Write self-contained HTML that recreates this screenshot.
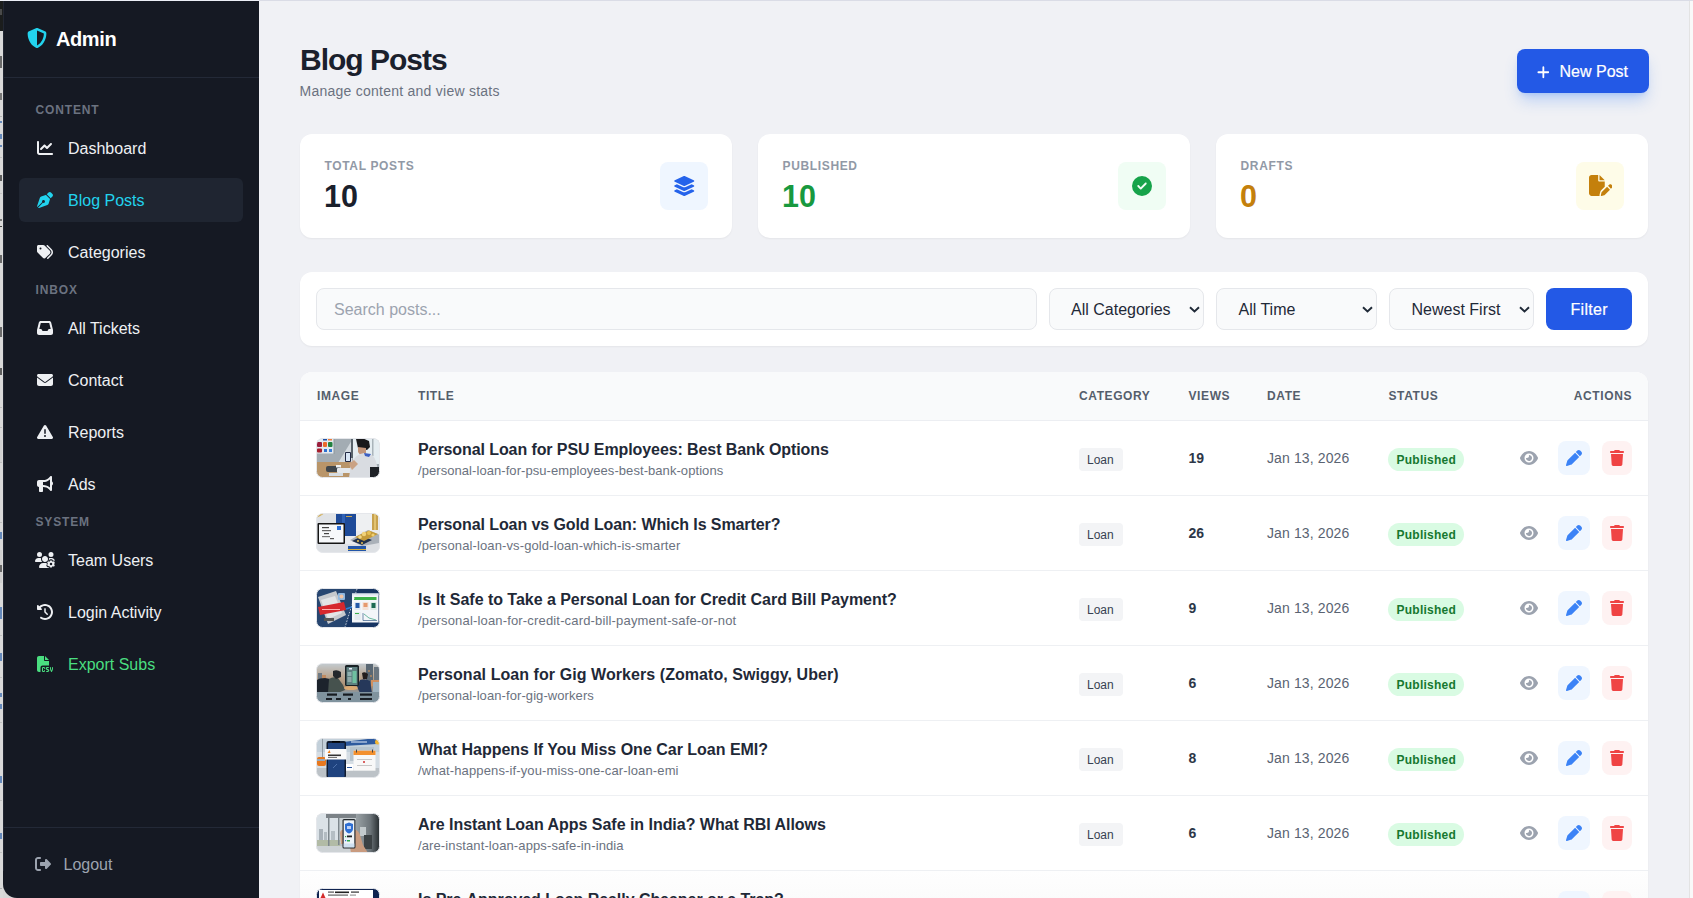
<!DOCTYPE html>
<html><head><meta charset="utf-8">
<style>
*{box-sizing:border-box;margin:0;padding:0}
html,body{width:1693px;height:898px;overflow:hidden;font-family:"Liberation Sans",sans-serif;background:#d6d6d6;position:relative}
.t{position:absolute;line-height:1;white-space:nowrap}
.r{position:absolute}
svg{display:block}
.thumb{position:absolute;width:64px;height:40px;filter:blur(0.35px)}
</style></head>
<body>
<div class="r" style="left:0px;top:0px;width:3px;height:898px;background:#d9d9d9;"></div>
<div class="r" style="left:0px;top:0px;width:3px;height:31px;background:#1b1d1d;"></div>
<div class="r" style="left:0px;top:0px;width:3px;height:1px;background:#b0a098;"></div>
<div class="r" style="left:0px;top:9px;width:1.6px;height:6px;background:#5a5a5a;opacity:0.75;"></div>
<div class="r" style="left:0px;top:56px;width:1.6px;height:12px;background:#444;opacity:0.75;"></div>
<div class="r" style="left:0px;top:93px;width:1.6px;height:7px;background:#555;opacity:0.75;"></div>
<div class="r" style="left:0px;top:116px;width:2px;height:1px;background:#b5b5b5;opacity:1;"></div>
<div class="r" style="left:0px;top:121px;width:1.6px;height:2px;background:#3d6db0;opacity:0.75;"></div>
<div class="r" style="left:0px;top:134px;width:1.6px;height:5px;background:#3d6db0;opacity:0.75;"></div>
<div class="r" style="left:0px;top:145px;width:1.6px;height:2px;background:#3d6db0;opacity:0.75;"></div>
<div class="r" style="left:0px;top:157px;width:2px;height:1px;background:#c0c0c0;opacity:1;"></div>
<div class="r" style="left:0px;top:175px;width:1.6px;height:6px;background:#333;opacity:0.75;"></div>
<div class="r" style="left:0px;top:193px;width:2px;height:1px;background:#c4c4c4;opacity:1;"></div>
<div class="r" style="left:0px;top:219px;width:1.6px;height:2px;background:#555;opacity:0.75;"></div>
<div class="r" style="left:0px;top:226px;width:2px;height:1px;background:#444;opacity:1;"></div>
<div class="r" style="left:0px;top:255px;width:1.6px;height:8px;background:#444;opacity:0.75;"></div>
<div class="r" style="left:0px;top:327px;width:1.6px;height:10px;background:#444;opacity:0.75;"></div>
<div class="r" style="left:0px;top:368px;width:1.6px;height:7px;background:#333;opacity:0.75;"></div>
<div class="r" style="left:0px;top:407px;width:2px;height:1px;background:#bdbdbd;opacity:1;"></div>
<div class="r" style="left:0px;top:427px;width:2px;height:1px;background:#bdbdbd;opacity:1;"></div>
<div class="r" style="left:0px;top:440px;width:1.6px;height:22px;background:#cdcdcd;opacity:0.75;"></div>
<div class="r" style="left:0px;top:462px;width:2px;height:1px;background:#bdbdbd;opacity:1;"></div>
<div class="r" style="left:0px;top:522px;width:2px;height:1px;background:#bdbdbd;opacity:1;"></div>
<div class="r" style="left:0px;top:532px;width:1.6px;height:7px;background:#3d6db0;opacity:0.75;"></div>
<div class="r" style="left:0px;top:550px;width:1.6px;height:33px;background:#cbcbcb;opacity:0.75;"></div>
<div class="r" style="left:0px;top:565px;width:1.6px;height:7px;background:#444;opacity:0.75;"></div>
<div class="r" style="left:0px;top:607px;width:1.6px;height:12px;background:#3d6db0;opacity:0.75;"></div>
<div class="r" style="left:0px;top:635px;width:2px;height:1px;background:#c0c0c0;opacity:1;"></div>
<div class="r" style="left:0px;top:653px;width:1.6px;height:8px;background:#3d6db0;opacity:0.75;"></div>
<div class="r" style="left:0px;top:677px;width:2px;height:1px;background:#c0c0c0;opacity:1;"></div>
<div class="r" style="left:0px;top:693px;width:1.6px;height:4px;background:#3d6db0;opacity:0.75;"></div>
<div class="r" style="left:0px;top:704px;width:1.6px;height:5px;background:#3d6db0;opacity:0.75;"></div>
<div class="r" style="left:0px;top:722px;width:2px;height:1px;background:#c0c0c0;opacity:1;"></div>
<div class="r" style="left:0px;top:776px;width:1.6px;height:7px;background:#3d6db0;opacity:0.75;"></div>
<div class="r" style="left:0px;top:800px;width:2px;height:1px;background:#c0c0c0;opacity:1;"></div>
<div class="r" style="left:0px;top:833px;width:1.6px;height:6px;background:#3d6db0;opacity:0.75;"></div>
<div class="r" style="left:0px;top:852px;width:2px;height:1px;background:#c0c0c0;opacity:1;"></div>
<div class="r" style="left:0px;top:888px;width:2px;height:1px;background:#b0b0b0;opacity:1;"></div>
<div class="r" style="left:0px;top:0px;width:1693px;height:1px;background:#dadce6;"></div>
<div class="r" style="left:0px;top:0px;width:259px;height:1px;background:#eceef6;"></div>
<div class="r" style="left:3px;top:1px;width:256px;height:897px;background:#151923;border-bottom-left-radius:14px;"></div>
<div class="r" style="left:3px;top:1px;width:1px;height:870px;background:#222733;"></div>
<div class="r" style="left:3px;top:77px;width:256px;height:1px;background:#232937;"></div>
<svg style="position:absolute;left:27.4px;top:28px;" width="20.00" height="20" viewBox="0 0 512 512"><path fill="#22d3ee" d="M256 0c4.6 0 9.2 1 13.4 2.9L457.7 82.8c22 9.3 38.4 31 38.3 57.2c-.5 99.2-41.3 280.7-213.6 363.2c-16.7 8-36.1 8-52.8 0C57.3 420.7 16.5 239.2 16 140c-.1-26.2 16.3-47.9 38.3-57.2L242.7 2.9C246.8 1 251.4 0 256 0zm0 66.8V444.8C394 378 431.1 230.1 432 141.4L256 66.8z"/></svg>
<div class="t" style="left:56px;top:29px;font-size:20px;color:#ffffff;font-weight:bold;letter-spacing:-0.4px;">Admin</div>
<div class="t" style="left:35.5px;top:104px;font-size:12px;color:#6b7280;font-weight:bold;letter-spacing:0.85px;">CONTENT</div>
<svg style="position:absolute;left:37.0px;top:140px;" width="16.00" height="16" viewBox="0 0 512 512"><path fill="#eef0f3" d="M64 64c0-17.7-14.3-32-32-32S0 46.3 0 64V400c0 44.2 35.8 80 80 80H480c17.7 0 32-14.3 32-32s-14.3-32-32-32H80c-8.8 0-16-7.2-16-16V64zm406.6 86.6c12.5-12.5 12.5-32.8 0-45.3s-32.8-12.5-45.3 0L320 210.7l-57.4-57.4c-12.5-12.5-32.8-12.5-45.3 0l-112 112c-12.5 12.5-12.5 32.8 0 45.3s32.8 12.5 45.3 0L240 221.3l57.4 57.4c12.5 12.5 32.8 12.5 45.3 0l128-128z"/></svg>
<div class="t" style="left:68px;top:141px;font-size:16px;color:#eef0f3;">Dashboard</div>
<div class="r" style="left:19px;top:178px;width:224px;height:44px;background:#1f2531;border-radius:6px;"></div>
<svg style="position:absolute;left:37.0px;top:192px;" width="16.00" height="16" viewBox="0 0 512 512"><path fill="#22d3ee" d="M368.4 18.3L312.7 74.1 437.9 199.3l55.7-55.7c21.9-21.9 21.9-57.3 0-79.2L447.6 18.3c-21.9-21.9-57.3-21.9-79.2 0zM288 94.6l-9.2 2.8L134.7 140.6c-19.9 6-35.7 21.2-42.3 41L3.8 445.8c-3.8 11.3-1 23.9 7.3 32.4L164.7 324.7c-3-6.3-4.7-13.3-4.7-20.7c0-26.5 21.5-48 48-48s48 21.5 48 48s-21.5 48-48 48c-7.4 0-14.4-1.7-20.7-4.7L33.7 500.9c8.6 8.3 21.1 11.2 32.4 7.3l264.3-88.6c19.7-6.6 35-22.4 41-42.3l43.2-144.1 2.7-9.2L288 94.6z"/></svg>
<div class="t" style="left:68px;top:193px;font-size:16px;color:#22d3ee;">Blog Posts</div>
<svg style="position:absolute;left:37.0px;top:244px;" width="16.00" height="16" viewBox="0 0 512 512"><path fill="#eef0f3" d="M345 39.1L472.8 168.4c52.4 53 52.4 138.2 0 191.2L360.8 472.9c-9.3 9.4-24.5 9.5-33.9 .2s-9.5-24.5-.2-33.9L438.6 325.9c33.9-34.3 33.9-89.4 0-123.7L310.9 72.9c-9.3-9.4-9.2-24.6 .2-33.9s24.6-9.2 33.9 .2zM0 229.5V80C0 53.5 21.5 32 48 32H197.5c17 0 33.3 6.7 45.3 18.7l168 168c25 25 25 65.5 0 90.5L277.3 442.7c-25 25-65.5 25-90.5 0l-168-168C6.7 262.7 0 246.5 0 229.5zM144 144a32 32 0 1 0 -64 0 32 32 0 1 0 64 0z"/></svg>
<div class="t" style="left:68px;top:245px;font-size:16px;color:#eef0f3;">Categories</div>
<svg style="position:absolute;left:37.0px;top:320px;" width="16.00" height="16" viewBox="0 0 512 512"><path fill="#eef0f3" d="M121 32C91.6 32 66 52 58.9 80.5L1.9 308.4C.6 313.5 0 318.7 0 323.9V416c0 35.3 28.7 64 64 64H448c35.3 0 64-28.7 64-64V323.9c0-5.2-.6-10.4-1.9-15.5l-57-227.9C446 52 420.4 32 391 32H121zm0 64H391l48 192H387.8c-12.1 0-23.2 6.8-28.6 17.7l-14.3 28.6c-5.4 10.8-16.5 17.7-28.6 17.7H195.8c-12.1 0-23.2-6.800-28.6-17.7l-14.3-28.6c-5.4-10.8-16.5-17.7-28.6-17.7H73L121 96z"/></svg>
<div class="t" style="left:68px;top:321px;font-size:16px;color:#eef0f3;">All Tickets</div>
<svg style="position:absolute;left:37.0px;top:372px;" width="16.00" height="16" viewBox="0 0 512 512"><path fill="#eef0f3" d="M48 64C21.5 64 0 85.5 0 112c0 15.1 7.1 29.3 19.2 38.4L236.8 313.6c11.4 8.5 27 8.5 38.4 0L492.8 150.4c12.1-9.1 19.2-23.3 19.2-38.4c0-26.5-21.5-48-48-48H48zM0 176V384c0 35.3 28.7 64 64 64H448c35.3 0 64-28.7 64-64V176L294.4 339.2c-22.8 17.1-54 17.1-76.8 0L0 176z"/></svg>
<div class="t" style="left:68px;top:373px;font-size:16px;color:#eef0f3;">Contact</div>
<svg style="position:absolute;left:37.0px;top:424px;" width="16.00" height="16" viewBox="0 0 512 512"><path fill="#eef0f3" d="M256 32c14.2 0 27.3 7.5 34.5 19.8l216 368c7.3 12.4 7.3 27.7 .2 40.1S486.3 480 472 480H40c-14.300 0-27.6-7.7-34.7-20.1s-7-27.8 .2-40.1l216-368C228.7 39.5 241.8 32 256 32zm0 128c-13.3 0-24 10.7-24 24V296c0 13.3 10.7 24 24 24s24-10.7 24-24V184c0-13.3-10.7-24-24-24zm32 224a32 32 0 1 0 -64 0 32 32 0 1 0 64 0z"/></svg>
<div class="t" style="left:68px;top:425px;font-size:16px;color:#eef0f3;">Reports</div>
<svg style="position:absolute;left:37.0px;top:476px;" width="16.00" height="16" viewBox="0 0 512 512"><path fill="#eef0f3" d="M480 32c0-12.9-7.8-24.6-19.8-29.6s-25.7-2.2-34.9 6.9L381.7 53c-48 48-113.1 75-181 75H192 160 64c-35.3 0-64 28.7-64 64v96c0 35.3 28.7 64 64 64l0 128c0 17.7 14.3 32 32 32h64c17.7 0 32-14.3 32-32V352l8.7 0c67.9 0 133 27 181 75l43.6 43.6c9.2 9.2 22.9 11.900 34.9 6.9s19.8-16.6 19.8-29.6V300.4c18.6-8.8 32-32.5 32-60.4s-13.4-51.6-32-60.4V32zm-64 76.7V240 371.3C357.2 317.8 280.5 288 200.7 288H192V192h8.7c79.8 0 156.5-29.8 215.3-83.3z"/></svg>
<div class="t" style="left:68px;top:477px;font-size:16px;color:#eef0f3;">Ads</div>
<svg style="position:absolute;left:35.0px;top:552px;" width="20.00" height="16" viewBox="0 0 640 512"><path fill="#eef0f3" d="M144 160A80 80 0 1 0 144 0a80 80 0 1 0 0 160zm368 0A80 80 0 1 0 512 0a80 80 0 1 0 0 160zM0 298.7C0 310.4 9.6 320 21.3 320H234.7c.2 0 .4 0 .7 0c-26.6-23.5-43.3-57.8-43.3-96c0-7.6 .7-15 1.9-22.3c-13.6-6.3-28.7-9.7-44.6-9.7H106.7C47.8 192 0 239.8 0 298.7zM320 320c24 0 45.9-8.8 62.7-23.3c2.5-3.7 5.2-7.3 8-10.7c2.7-3.3 5.7-6.1 9-8.3C410 262.3 416 243.900 416 224c0-53-43-96-96-96s-96 43-96 96s43 96 96 96zm65.4 60.2c-10.3-5.9-18.1-16.2-20.8-28.2H261.3C187.7 352 128 411.7 128 485.3c0 14.7 11.9 26.7 26.7 26.7H455.2c-2.1-5.2-3.2-10.9-3.2-16.4v-3c-1.3-.7-2.7-1.5-4-2.3l-2.6 1.5c-16.8 9.7-40.5 8-54.7-9.7c-4.5-5.6-8.6-11.5-12.4-17.6l-2.6-4.5c-3.4-6.2-6.4-12.6-9-19.3c-8.2-21.2 2.2-42.6 19-52.3l2.7-1.5c0-.8 0-1.5 0-2.3s0-1.5 0-2.3l-2.7-1.5zM533.3 192H490.7c-15.9 0-31 3.5-44.6 9.7c1.3 7.2 1.9 14.7 1.900 22.3c0 17.4-3.5 33.9-9.7 49c2.5 .9 4.9 2 7.1 3.3l2.6 1.5c1.3-.8 2.6-1.6 4-2.3v-3c0-19.4 13.3-39.1 35.8-42.6c7.9-1.2 16-1.9 24.2-1.9s16.3 .6 24.2 1.9c22.5 3.5 35.8 23.2 35.8 42.6v3c1.3 .7 2.7 1.5 4 2.3l2.6-1.5c16.8-9.7 40.5-8 54.7 9.7c2.3 2.8 4.5 5.8 6.6 8.7c-2.1-57.1-49-102.7-106.6-102.7zm91.3 163.9c6.3-3.6 9.5-11.1 6.8-18c-2.1-5.5-4.6-10.8-7.4-15.9l-2.3-4c-3.1-5.1-6.5-9.9-10.2-14.5c-4.6-5.700-12.7-6.7-19-3L574.4 311c-8.9-7.6-19.1-13.6-30.4-17.6v-9c0-7.3-4.9-13.8-12.1-14.9c-6.5-1-13.1-1.5-19.9-1.5s-13.4 .5-19.9 1.5c-7.2 1.1-12.1 7.6-12.1 14.9v9c-11.2 4-21.5 10-30.4 17.6l-18.2-10.5c-6.3-3.6-14.4-2.6-19 3c-3.7 4.6-7.1 9.5-10.2 14.6l-2.3 3.9c-2.8 5.1-5.3 10.4-7.4 15.900c-2.6 6.8 .5 14.3 6.8 17.9l7.9 4.6c-1.8 9.5-1.8 21.4 0 30.9l-7.9 4.6c-6.3 3.6-9.5 11.1-6.8 17.9c2.1 5.5 4.6 10.7 7.4 15.8l2.4 4.1c3 5.1 6.4 9.9 10.1 14.5c4.6 5.7 12.7 6.7 19 3L449.6 457c8.9 7.6 19.2 13.6 30.4 17.6v9c0 7.3 4.9 13.8 12.1 14.9c6.5 1 13.1 1.5 19.9 1.5s13.4-.5 19.9-1.5c7.2-1.1 12.1-7.6 12.1-14.9v-9c11.2-4 21.5-10 30.4-17.6l18.2 10.5c6.3 3.6 14.4 2.6 19-3c3.7-4.6 7.1-9.4 10.1-14.5l2.4-4.2c2.8-5.1 5.3-10.3 7.4-15.8c2.6-6.8-.5-14.3-6.8-17.9l-7.9-4.6c1.8-9.5 1.8-21.4 0-30.9l7.9-4.6zM472 384a40 40 0 1 1 80 0 40 40 0 1 1 -80 0z"/></svg>
<div class="t" style="left:68px;top:553px;font-size:16px;color:#eef0f3;">Team Users</div>
<svg style="position:absolute;left:37.0px;top:604px;" width="16.00" height="16" viewBox="0 0 512 512"><path fill="#eef0f3" d="M75 75L41 41C25.9 25.9 0 36.6 0 57.9V168c0 13.3 10.7 24 24 24H134.1c21.4 0 32.1-25.9 17-41l-30.8-30.8C155 85.5 203 64 256 64c106 0 192 86 192 192s-86 192-192 192c-40.8 0-78.6-12.7-109.7-34.4c-14.5-10.1-34.4-6.6-44.6 7.9s-6.6 34.4 7.9 44.6C151.2 495 201.7 512 256 512c141.4 0 256-114.600 256-256S397.4 0 256 0C185.3 0 121.3 28.7 75 75zm181 53c-13.3 0-24 10.7-24 24V256c0 6.4 2.5 12.5 7 17l72 72c9.4 9.4 24.6 9.4 33.9 0s9.4-24.6 0-33.9l-65-65V152c0-13.3-10.7-24-24-24z"/></svg>
<div class="t" style="left:68px;top:605px;font-size:16px;color:#eef0f3;">Login Activity</div>
<svg style="position:absolute;left:37.0px;top:656px;" width="16.00" height="16" viewBox="0 0 512 512"><path fill="#4ade80" d="M0 64C0 28.7 28.7 0 64 0H224V128c0 17.7 14.3 32 32 32H384V304H176c-35.3 0-64 28.7-64 64V512H64c-35.3 0-64-28.7-64-64V64zm384 64H256V0L384 128zM200 352h16c22.1 0 40 17.9 40 40v8c0 8.8-7.2 16-16 16s-16-7.2-16-16v-8c0-4.4-3.6-8-8-8H200c-4.4 0-8 3.6-8 8v80c0 4.4 3.6 8 8 8h16c4.4 0 8-3.6 8-8v-8c0-8.8 7.2-16 16-16s16 7.2 16 16v8c0 22.1-17.9 40-40 40H200c-22.1 0-40-17.9-40-40V392c0-22.1 17.9-40 40-40zm133.1 0H368c8.8 0 16 7.2 16 16s-7.2 16-16 16H333.1c-7.2 0-13.1 5.9-13.1 13.1c0 5.2 3 9.9 7.8 12l37.4 16.6c16.3 7.2 26.8 23.4 26.8 41.2c0 24.9-20.2 45.1-45.1 45.1H304c-8.8 0-16-7.2-16-16s7.2-16 16-16h32.9c7.2 0 13.1-5.9 13.1-13.1c0-5.2-3-9.9-7.8-12l-37.4-16.6c-16.3-7.2-26.8-23.4-26.8-41.2c0-24.9 20.2-45.1 45.1-45.1zm98.9 0c8.8 0 16 7.2 16 16v31.6c0 23 5.5 45.600 16 66c10.5-20.3 16-42.9 16-66V368c0-8.8 7.2-16 16-16s16 7.2 16 16v31.6c0 34.7-10.3 68.7-29.6 97.6l-5.1 7.7c-3 4.5-8 7.1-13.3 7.1s-10.3-2.7-13.3-7.1l-5.1-7.7c-19.3-28.9-29.6-62.9-29.6-97.6V368c0-8.8 7.2-16 16-16z"/></svg>
<div class="t" style="left:68px;top:657px;font-size:16px;color:#4ade80;">Export Subs</div>
<div class="t" style="left:35.5px;top:284px;font-size:12px;color:#6b7280;font-weight:bold;letter-spacing:0.85px;">INBOX</div>
<div class="t" style="left:35.5px;top:516px;font-size:12px;color:#6b7280;font-weight:bold;letter-spacing:0.85px;">SYSTEM</div>
<div class="r" style="left:3px;top:827px;width:256px;height:1px;background:#232937;"></div>
<svg style="position:absolute;left:35px;top:856px;" width="16.00" height="16" viewBox="0 0 512 512"><path fill="#9ca3af" d="M377.9 105.9L500.7 228.7c7.2 7.2 11.3 17.1 11.3 27.3s-4.1 20.1-11.3 27.3L377.9 406.1c-6.4 6.4-15 9.9-24 9.9c-18.7 0-33.9-15.2-33.9-33.9l0-62.1-128 0c-17.7 0-32-14.3-32-32l0-64c0-17.7 14.3-32 32-32l128 0 0-62.1c0-18.7 15.2-33.9 33.9-33.9c9 0 17.6 3.6 24 9.9zM160 96L96 96c-17.7 0-32 14.3-32 32l0 256c0 17.7 14.3 32 32 32l64 0c17.7 0 32 14.3 32 32s-14.3 32-32 32l-64 0c-53 0-96-43-96-96L0 128C0 75 43 32 96 32l64 0c17.7 0 32 14.3 32 32s-14.3 32-32 32z"/></svg>
<div class="t" style="left:63.5px;top:857px;font-size:16px;color:#9ca3af;">Logout</div>
<div class="r" style="left:259px;top:1px;width:1430px;height:897px;background:#f0f1f5;"></div>
<div class="r" style="left:1689px;top:1px;width:1px;height:897px;background:#e3e3e3;"></div>
<div class="r" style="left:1690px;top:1px;width:3px;height:897px;background:#f9f9f9;"></div>
<div class="t" style="left:300px;top:45px;font-size:30px;color:#1a202c;font-weight:bold;letter-spacing:-1px;">Blog Posts</div>
<div class="t" style="left:299.5px;top:84px;font-size:14px;color:#6b7280;letter-spacing:0.25px;">Manage content and view stats</div>
<div class="r" style="left:1517px;top:49px;width:132px;height:44px;background:#2359e6;border-radius:8px;box-shadow:0 10px 15px -3px rgba(59,130,246,.3),0 4px 6px -4px rgba(59,130,246,.3);"></div>
<svg style="position:absolute;left:1536.6px;top:64.5px;" width="12.69" height="14.5" viewBox="0 0 448 512"><path fill="#ffffff" d="M256 80c0-17.7-14.3-32-32-32s-32 14.3-32 32V224H48c-17.7 0-32 14.3-32 32s14.3 32 32 32H192V432c0 17.7 14.3 32 32 32s32-14.3 32-32V288H400c17.7 0 32-14.3 32-32s-14.3-32-32-32H256V80z"/></svg>
<div class="t" style="left:1559.5px;top:64px;font-size:16px;color:#ffffff;-webkit-text-stroke:0.2px #fff;">New Post</div>
<div class="r" style="left:300px;top:134px;width:432px;height:104px;background:#ffffff;border-radius:12px;box-shadow:0 1px 2px rgba(0,0,0,.05);"></div>
<div class="t" style="left:324.5px;top:160px;font-size:12px;color:#9199a6;font-weight:bold;letter-spacing:0.65px;">TOTAL POSTS</div>
<div class="t" style="left:324px;top:181px;font-size:30.5px;color:#1a202c;font-weight:bold;">10</div>
<div class="r" style="left:660px;top:162px;width:48px;height:48px;background:#eff6ff;border-radius:8px;"></div>
<svg style="position:absolute;left:672.9px;top:176px;" width="22.50" height="20" viewBox="0 0 576 512"><path fill="#2563eb" d="M264.5 5.2c14.9-6.9 32.1-6.9 47 0l218.6 101c8.5 3.9 13.9 12.4 13.9 21.8s-5.4 17.9-13.9 21.8l-218.6 101c-14.9 6.9-32.1 6.9-47 0L45.9 149.8C37.4 145.8 32 137.3 32 128s5.4-17.9 13.9-21.8L264.5 5.2zM476.9 209.6l53.2 24.6c8.5 3.9 13.9 12.4 13.9 21.8s-5.4 17.9-13.9 21.8l-218.6 101c-14.9 6.9-32.1 6.9-47 0L45.9 277.8C37.4 273.8 32 265.3 32 256s5.4-17.9 13.9-21.8l53.2-24.6 152 70.2c23.4 10.8 50.4 10.8 73.8 0l152-70.2zm-152 198.2l152-70.2 53.2 24.6c8.5 3.9 13.9 12.4 13.9 21.8s-5.4 17.9-13.9 21.8l-218.6 101c-14.9 6.9-32.1 6.9-47 0L45.9 405.8C37.4 401.8 32 393.3 32 384s5.4-17.9 13.9-21.8l53.2-24.6 152 70.2c23.4 10.8 50.4 10.8 73.8 0z"/></svg>
<div class="r" style="left:758px;top:134px;width:432px;height:104px;background:#ffffff;border-radius:12px;box-shadow:0 1px 2px rgba(0,0,0,.05);"></div>
<div class="t" style="left:782.5px;top:160px;font-size:12px;color:#9199a6;font-weight:bold;letter-spacing:0.65px;">PUBLISHED</div>
<div class="t" style="left:782px;top:181px;font-size:30.5px;color:#18993f;font-weight:bold;">10</div>
<div class="r" style="left:1118px;top:162px;width:48px;height:48px;background:#f0fdf4;border-radius:8px;"></div>
<svg style="position:absolute;left:1132px;top:176px;" width="20.00" height="20" viewBox="0 0 512 512"><path fill="#16a34a" d="M256 512A256 256 0 1 0 256 0a256 256 0 1 0 0 512zM369 209L241 337c-9.4 9.4-24.6 9.4-33.9 0l-64-64c-9.4-9.4-9.4-24.6 0-33.9s24.6-9.4 33.9 0l47 47L335 175c9.4-9.4 24.6-9.4 33.9 0s9.4 24.6 0 33.9z"/></svg>
<div class="r" style="left:1216px;top:134px;width:432px;height:104px;background:#ffffff;border-radius:12px;box-shadow:0 1px 2px rgba(0,0,0,.05);"></div>
<div class="t" style="left:1240.5px;top:160px;font-size:12px;color:#9199a6;font-weight:bold;letter-spacing:0.65px;">DRAFTS</div>
<div class="t" style="left:1240px;top:181px;font-size:30.5px;color:#c4800c;font-weight:bold;">0</div>
<div class="r" style="left:1576px;top:162px;width:48px;height:48px;background:#fefce8;border-radius:8px;"></div>
<svg style="position:absolute;left:1588.6px;top:175px;" width="23.62" height="21" viewBox="0 0 576 512"><path fill="#c4800c" d="M0 64C0 28.7 28.7 0 64 0H224V128c0 17.7 14.3 32 32 32H384V285.7l-86.8 86.8c-10.3 10.3-17.5 23.1-21 37.2l-18.7 74.9c-2.3 9.2-1.8 18.8 1.3 27.5H64c-35.3 0-64-28.7-64-64V64zm384 64H256V0L384 128zM549.8 235.7l14.4 14.4c15.6 15.6 15.6 40.9 0 56.6l-29.4 29.4-71-71 29.4-29.4c15.6-15.6 40.9-15.6 56.6 0zM311.9 417L441.1 287.8l71 71L382.9 487.9c-4.1 4.1-9.2 7-14.9 8.4l-60.1 15c-5.5 1.4-11.3-.2-15.3-4.200s-5.6-9.8-4.2-15.3l15-60.1c1.4-5.6 4.3-10.8 8.4-14.9z"/></svg>
<div class="r" style="left:300px;top:272px;width:1348px;height:74px;background:#ffffff;border-radius:12px;box-shadow:0 1px 2px rgba(0,0,0,.05);"></div>
<div class="r" style="left:316px;top:288px;width:721px;height:42px;background:#f9fafb;border-radius:8px;border:1px solid #e5e7eb;"></div>
<div class="t" style="left:334px;top:302px;font-size:16px;color:#9ca3af;">Search posts...</div>
<div class="r" style="left:1049px;top:288px;width:155px;height:42px;background:#f9fafb;border-radius:8px;border:1px solid #e5e7eb;"></div>
<div class="t" style="left:1071px;top:302px;font-size:16px;color:#1f2937;">All Categories</div>
<svg style="position:absolute;left:1189px;top:305.5px" width="11" height="7" viewBox="0 0 11 7"><path d="M1 1.2l4.5 4.3L10 1.2" stroke="#1f2937" stroke-width="1.9" fill="none"/></svg>
<div class="r" style="left:1216px;top:288px;width:161px;height:42px;background:#f9fafb;border-radius:8px;border:1px solid #e5e7eb;"></div>
<div class="t" style="left:1238.5px;top:302px;font-size:16px;color:#1f2937;">All Time</div>
<svg style="position:absolute;left:1362px;top:305.5px" width="11" height="7" viewBox="0 0 11 7"><path d="M1 1.2l4.5 4.3L10 1.2" stroke="#1f2937" stroke-width="1.9" fill="none"/></svg>
<div class="r" style="left:1389px;top:288px;width:145px;height:42px;background:#f9fafb;border-radius:8px;border:1px solid #e5e7eb;"></div>
<div class="t" style="left:1411.5px;top:302px;font-size:16px;color:#1f2937;">Newest First</div>
<svg style="position:absolute;left:1519px;top:305.5px" width="11" height="7" viewBox="0 0 11 7"><path d="M1 1.2l4.5 4.3L10 1.2" stroke="#1f2937" stroke-width="1.9" fill="none"/></svg>
<div class="r" style="left:1546px;top:288px;width:86px;height:42px;background:#2359e6;border-radius:8px;"></div>
<div class="t" style="left:1570.5px;top:302px;font-size:16px;color:#ffffff;letter-spacing:0.3px;-webkit-text-stroke:0.2px #fff;">Filter</div>
<div class="r" style="left:300px;top:372px;width:1348px;height:540px;background:#ffffff;border-radius:12px;box-shadow:0 1px 2px rgba(0,0,0,.05);overflow:hidden;"></div>
<div class="r" style="left:300px;top:372px;width:1348px;height:48px;background:#f9fafb;border-top-left-radius:12px;border-top-right-radius:12px;"></div>
<div class="r" style="left:300px;top:420px;width:1348px;height:1px;background:#eceef2;"></div>
<div class="t" style="left:317px;top:390px;font-size:12px;color:#555e6c;font-weight:bold;letter-spacing:0.6px;">IMAGE</div>
<div class="t" style="left:418px;top:390px;font-size:12px;color:#555e6c;font-weight:bold;letter-spacing:0.6px;">TITLE</div>
<div class="t" style="left:1079px;top:390px;font-size:12px;color:#555e6c;font-weight:bold;letter-spacing:0.6px;">CATEGORY</div>
<div class="t" style="left:1188.5px;top:390px;font-size:12px;color:#555e6c;font-weight:bold;letter-spacing:0.6px;">VIEWS</div>
<div class="t" style="left:1267px;top:390px;font-size:12px;color:#555e6c;font-weight:bold;letter-spacing:0.6px;">DATE</div>
<div class="t" style="left:1388.5px;top:390px;font-size:12px;color:#555e6c;font-weight:bold;letter-spacing:0.6px;">STATUS</div>
<div class="t" style="left:1632px;top:390px;font-size:12px;color:#555e6c;font-weight:bold;letter-spacing:0.6px;transform:translateX(-100%);">ACTIONS</div>
<div class="r" style="left:300px;top:495px;width:1348px;height:1px;background:#eef0f3;"></div>
<div class="thumb" style="left:316px;top:438px"><svg width="64" height="40" viewBox="0 0 64 40"><defs><clipPath id="c0"><rect x="0.5" y="0.5" width="63" height="39" rx="6"/></clipPath></defs><g clip-path="url(#c0)">
<rect width="64" height="40" fill="#a3acb3"/>
<polygon points="36,2 36,25 22,25" fill="#d3d9de"/>
<rect x="0" y="0" width="18" height="15.5" fill="#e3e9ef"/>
<rect x="17.5" y="0" width="1" height="16" fill="#8c959c"/>
<rect x="7" y="0" width="4" height="2.5" fill="#1f4fa3"/><rect x="12" y="0" width="4" height="2.5" fill="#ee7a3a"/>
<rect x="1" y="4" width="5" height="5" rx="1" fill="#9b1e3c"/><rect x="7" y="4" width="4" height="5" rx="1" fill="#ea6a2b"/><rect x="12" y="4" width="4.5" height="5" rx="1" fill="#22803e"/>
<rect x="1" y="10.5" width="5" height="4" rx="1" fill="#a61f2c"/><rect x="8" y="11" width="3" height="3" fill="#2c6fd0"/><rect x="13" y="11" width="3" height="3" fill="#3a7fd8"/>
<rect x="35" y="0" width="2" height="20" fill="#59636b"/>
<rect x="37" y="0" width="27" height="26" fill="#e5edf1"/>
<rect x="56" y="0" width="1.5" height="18" fill="#aab4ba"/>
<rect x="0" y="24" width="40" height="16" fill="#b99569"/>
<rect x="10" y="28" width="14" height="6" rx="2" fill="#3f464c"/>
<rect x="21" y="30" width="14" height="5" rx="1" fill="#e4e8ec"/>
<rect x="13" y="35" width="14" height="3" fill="#d6dce2"/>
<rect x="20" y="27" width="5" height="2.5" fill="#eef1f3"/>
<path d="M40 1 Q46 -1 53 3 L54 9 L51 12 L42 10 Z" fill="#19191b"/>
<path d="M42 9 L50 10 L50 17 L45 18 L42 14 Z" fill="#c2957a"/>
<path d="M33 40 L35 25 Q40 16 48 15 L56 17 Q62 22 62 40 Z" fill="#d9dce1"/>
<path d="M48 15 L55 16 L53 19 L49 18 Z" fill="#3d5fc2"/>
<path d="M33 26 L38 22 L42 26 L36 32 Z" fill="#caa284"/>
<rect x="54" y="29" width="10" height="11" fill="#1e2126"/>
<rect x="29" y="14" width="6" height="10" rx="1" fill="#232a44"/><rect x="30" y="15" width="4" height="8" fill="#d9e6f5"/>
</g><rect x="0.5" y="0.5" width="63" height="39" rx="6" fill="none" stroke="#e5e7eb" stroke-width="1"/></svg></div>
<div class="t" style="left:418px;top:442px;font-size:16px;color:#1f2937;font-weight:bold;letter-spacing:-0.09px;">Personal Loan for PSU Employees: Best Bank Options</div>
<div class="t" style="left:418px;top:464px;font-size:13px;color:#6b7280;letter-spacing:0.064px;">/personal-loan-for-psu-employees-best-bank-options</div>
<div class="r" style="left:1079px;top:448px;width:44px;height:23px;background:#f3f4f6;border-radius:4px;"></div>
<div class="t" style="left:1087px;top:454px;font-size:12px;color:#374151;">Loan</div>
<div class="t" style="left:1188.5px;top:451px;font-size:14px;color:#2d3748;font-weight:bold;">19</div>
<div class="t" style="left:1267px;top:451px;font-size:14px;color:#5a6372;letter-spacing:0.12px;">Jan 13, 2026</div>
<div class="r" style="left:1388px;top:448px;width:76px;height:23px;background:#d9fbe3;border-radius:12px;"></div>
<div class="t" style="left:1396.5px;top:454px;font-size:12px;color:#16782f;font-weight:bold;letter-spacing:0.25px;">Published</div>
<svg style="position:absolute;left:1520px;top:450px;" width="18.00" height="16" viewBox="0 0 576 512"><path fill="#9ca3af" d="M288 32c-80.8 0-145.5 36.8-192.6 80.6C48.6 156 17.3 208 2.5 243.7c-3.3 7.9-3.3 16.7 0 24.6C17.3 304 48.6 356 95.4 399.4C142.5 443.2 207.2 480 288 480s145.5-36.8 192.6-80.6c46.8-43.5 78.1-95.4 93-131.1c3.3-7.9 3.3-16.7 0-24.6c-14.9-35.7-46.2-87.7-93-131.1C433.5 68.8 368.8 32 288 32zM144 256a144 144 0 1 1 288 0 144 144 0 1 1 -288 0zm144-64c0 35.3-28.7 64-64 64c-7.1 0-13.9-1.2-20.3-3.3c-5.5-1.8-11.9 1.6-11.7 7.4c.3 6.9 1.3 13.8 3.200 20.7c13.7 51.2 66.4 81.6 117.6 67.9s81.6-66.4 67.9-117.6c-11.1-41.5-47.8-69.4-88.6-71.1c-5.8-.2-9.2 6.1-7.4 11.7c2.1 6.4 3.3 13.2 3.3 20.3z"/></svg>
<div class="r" style="left:1558px;top:441px;width:32px;height:34px;background:#eff6ff;border-radius:8px;"></div>
<svg style="position:absolute;left:1566px;top:450px;" width="16.00" height="16" viewBox="0 0 512 512"><path fill="#3b82f6" d="M362.7 19.3L314.3 67.7 444.3 197.7l48.4-48.4c25-25 25-65.5 0-90.5L453.3 19.3c-25-25-65.5-25-90.5 0zm-71 71L58.6 323.5c-10.4 10.4-18 23.3-22.2 37.4L1 481.2C-1.5 489.7 .8 498.8 7 505s15.3 8.5 23.7 6.1l120.3-35.4c14.1-4.2 27-11.8 37.4-22.2L421.7 220.3 291.7 90.3z"/></svg>
<div class="r" style="left:1602px;top:441px;width:30px;height:34px;background:#fef2f2;border-radius:8px;"></div>
<svg style="position:absolute;left:1610px;top:450px;" width="14.00" height="16" viewBox="0 0 448 512"><path fill="#ef4444" d="M135.2 17.7L128 32H32C14.3 32 0 46.3 0 64S14.3 96 32 96H416c17.7 0 32-14.3 32-32s-14.3-32-32-32H320l-7.2-14.3C307.4 6.8 296.3 0 284.2 0H163.8c-12.1 0-23.2 6.8-28.6 17.7zM416 128H32L53.2 467c1.6 25.3 22.6 45 47.9 45H346.9c25.300 0 46.3-19.7 47.9-45L416 128z"/></svg>
<div class="r" style="left:300px;top:570px;width:1348px;height:1px;background:#eef0f3;"></div>
<div class="thumb" style="left:316px;top:513px"><svg width="64" height="40" viewBox="0 0 64 40"><defs><clipPath id="c1"><rect x="0.5" y="0.5" width="63" height="39" rx="6"/></clipPath></defs><g clip-path="url(#c1)">
<rect width="64" height="40" fill="#e9ebee"/>
<rect x="0" y="0" width="20" height="12" fill="#dfe2e6"/>
<path d="M0 3 Q4 1 7 0 L9 0 Q5 3 0 5 Z" fill="#d4b261"/>
<rect x="20" y="0" width="20" height="23" fill="#1e4b99"/>
<rect x="26" y="0" width="3" height="23" fill="#2f62b6"/>
<rect x="30" y="3" width="6" height="1" fill="#c9a552"/>
<rect x="40" y="0" width="16" height="18" fill="#eef0f2"/>
<rect x="56" y="0" width="6" height="17" fill="#c7a24f"/><rect x="58" y="0" width="2" height="17" fill="#e2c372"/>
<rect x="0" y="31" width="64" height="9" fill="#dde0e4"/>
<rect x="32" y="33" width="18" height="5" fill="#2356a8"/><rect x="32" y="36" width="18" height="1" fill="#d4af37"/>
<rect x="1.5" y="10" width="27.5" height="21" rx="1" fill="#151515"/>
<rect x="3" y="11.5" width="24.5" height="18" fill="#f6f8fa"/>
<rect x="6" y="14" width="7" height="1.2" fill="#444"/><rect x="6" y="17" width="9" height="1.2" fill="#666"/><rect x="8" y="20" width="5" height="1.2" fill="#444"/><rect x="6" y="23" width="8" height="1.2" fill="#777"/><rect x="14" y="25" width="4" height="1.2" fill="#555"/>
<rect x="21" y="13" width="4" height="4" fill="#2b6fd6"/>
<polygon points="34,27 52,17 64,22 64,30 46,33" fill="#aab1b9"/><polygon points="36,28 46,23 56,27 46,32" fill="#22324c"/>
<polygon points="39,24 53,17.5 62,21 48,28" fill="#c49b3a"/>
<circle cx="48" cy="21" r="2.2" fill="#f0d27a"/><circle cx="53" cy="20" r="2" fill="#e6bf55"/><circle cx="44" cy="24" r="1.8" fill="#f2d98a"/><circle cx="57" cy="22" r="1.6" fill="#f0cf70"/>
<circle cx="42" cy="28" r="1" fill="#e8c050"/><circle cx="46" cy="30" r="1" fill="#e8c050"/>
</g><rect x="0.5" y="0.5" width="63" height="39" rx="6" fill="none" stroke="#e5e7eb" stroke-width="1"/></svg></div>
<div class="t" style="left:418px;top:517px;font-size:16px;color:#1f2937;font-weight:bold;letter-spacing:-0.087px;">Personal Loan vs Gold Loan: Which Is Smarter?</div>
<div class="t" style="left:418px;top:539px;font-size:13px;color:#6b7280;letter-spacing:0.117px;">/personal-loan-vs-gold-loan-which-is-smarter</div>
<div class="r" style="left:1079px;top:523px;width:44px;height:23px;background:#f3f4f6;border-radius:4px;"></div>
<div class="t" style="left:1087px;top:529px;font-size:12px;color:#374151;">Loan</div>
<div class="t" style="left:1188.5px;top:526px;font-size:14px;color:#2d3748;font-weight:bold;">26</div>
<div class="t" style="left:1267px;top:526px;font-size:14px;color:#5a6372;letter-spacing:0.12px;">Jan 13, 2026</div>
<div class="r" style="left:1388px;top:523px;width:76px;height:23px;background:#d9fbe3;border-radius:12px;"></div>
<div class="t" style="left:1396.5px;top:529px;font-size:12px;color:#16782f;font-weight:bold;letter-spacing:0.25px;">Published</div>
<svg style="position:absolute;left:1520px;top:525px;" width="18.00" height="16" viewBox="0 0 576 512"><path fill="#9ca3af" d="M288 32c-80.8 0-145.5 36.8-192.6 80.6C48.6 156 17.3 208 2.5 243.7c-3.3 7.9-3.3 16.7 0 24.6C17.3 304 48.6 356 95.4 399.4C142.5 443.2 207.2 480 288 480s145.5-36.8 192.6-80.6c46.8-43.5 78.1-95.4 93-131.1c3.3-7.9 3.3-16.7 0-24.6c-14.9-35.7-46.2-87.7-93-131.1C433.5 68.8 368.8 32 288 32zM144 256a144 144 0 1 1 288 0 144 144 0 1 1 -288 0zm144-64c0 35.3-28.7 64-64 64c-7.1 0-13.9-1.2-20.3-3.3c-5.5-1.8-11.9 1.6-11.7 7.4c.3 6.9 1.3 13.8 3.200 20.7c13.7 51.2 66.4 81.6 117.6 67.9s81.6-66.4 67.9-117.6c-11.1-41.5-47.8-69.4-88.6-71.1c-5.8-.2-9.2 6.1-7.4 11.7c2.1 6.4 3.3 13.2 3.3 20.3z"/></svg>
<div class="r" style="left:1558px;top:516px;width:32px;height:34px;background:#eff6ff;border-radius:8px;"></div>
<svg style="position:absolute;left:1566px;top:525px;" width="16.00" height="16" viewBox="0 0 512 512"><path fill="#3b82f6" d="M362.7 19.3L314.3 67.7 444.3 197.7l48.4-48.4c25-25 25-65.5 0-90.5L453.3 19.3c-25-25-65.5-25-90.5 0zm-71 71L58.6 323.5c-10.4 10.4-18 23.3-22.2 37.4L1 481.2C-1.5 489.7 .8 498.8 7 505s15.3 8.5 23.7 6.1l120.3-35.4c14.1-4.2 27-11.8 37.4-22.2L421.7 220.3 291.7 90.3z"/></svg>
<div class="r" style="left:1602px;top:516px;width:30px;height:34px;background:#fef2f2;border-radius:8px;"></div>
<svg style="position:absolute;left:1610px;top:525px;" width="14.00" height="16" viewBox="0 0 448 512"><path fill="#ef4444" d="M135.2 17.7L128 32H32C14.3 32 0 46.3 0 64S14.3 96 32 96H416c17.7 0 32-14.3 32-32s-14.3-32-32-32H320l-7.2-14.3C307.4 6.8 296.3 0 284.2 0H163.8c-12.1 0-23.2 6.8-28.6 17.7zM416 128H32L53.2 467c1.6 25.3 22.6 45 47.9 45H346.9c25.300 0 46.3-19.7 47.9-45L416 128z"/></svg>
<div class="r" style="left:300px;top:645px;width:1348px;height:1px;background:#eef0f3;"></div>
<div class="thumb" style="left:316px;top:588px"><svg width="64" height="40" viewBox="0 0 64 40"><defs><clipPath id="c2"><rect x="0.5" y="0.5" width="63" height="39" rx="6"/></clipPath></defs><g clip-path="url(#c2)">
<rect width="64" height="40" fill="#274670"/>
<polygon points="41,0 64,0 64,40 30,40" fill="#173563"/>
<rect x="36" y="5.5" width="26.5" height="29" fill="#f3f6f9"/>
<rect x="36" y="5.5" width="26.5" height="2" fill="#dde6ef"/>
<rect x="38" y="9" width="22.5" height="3" fill="#3cb24a"/>
<rect x="38.5" y="14" width="6" height="8" fill="#dfe8f2"/><rect x="39.5" y="15" width="4" height="5" fill="#2359a8"/>
<rect x="46.5" y="14" width="6" height="8" fill="#f3e2d8"/><rect x="47.5" y="15" width="4" height="4" fill="#e69a6e"/>
<rect x="54.5" y="14" width="6" height="8" fill="#dcebe5"/><rect x="55.5" y="15" width="4" height="5" fill="#1c6b52"/>
<rect x="38.5" y="24" width="6" height="8" fill="#e2e8ee"/><rect x="39" y="25" width="4" height="1" fill="#3cb24a"/>
<path d="M47 25 L47 32.5 L61 32.5" stroke="#3a5f8a" stroke-width="0.7" fill="none"/>
<path d="M48 26 Q52 31 60 32" stroke="#4aa88a" stroke-width="0.8" fill="none"/>
<polygon points="2,9 20,3 30,27 12,36" fill="#c6c9cd"/>
<polygon points="5,12 19,8 26,25 12,31" fill="#e3e5e7"/>
<polygon points="2,19 28,14 30,22 4,27" fill="#d6282e"/>
<rect x="6" y="21" width="18" height="1" fill="#ffb0b0"/>
<rect x="8" y="30" width="10" height="3" fill="#555"/>
<rect x="22" y="5" width="7" height="7" rx="1" fill="#8fb8e0"/><circle cx="25.5" cy="8.5" r="2" fill="#f2c3a2"/>
<path d="M41 1 L29 39" stroke="#ffffff" stroke-width="0.7" stroke-dasharray="1.5 1.5"/>
<path d="M30 21 L36 19" stroke="#2f7fd8" stroke-width="1.5"/>
</g><rect x="0.5" y="0.5" width="63" height="39" rx="6" fill="none" stroke="#e5e7eb" stroke-width="1"/></svg></div>
<div class="t" style="left:418px;top:592px;font-size:16px;color:#1f2937;font-weight:bold;letter-spacing:-0.031px;">Is It Safe to Take a Personal Loan for Credit Card Bill Payment?</div>
<div class="t" style="left:418px;top:614px;font-size:13px;color:#6b7280;letter-spacing:0.165px;">/personal-loan-for-credit-card-bill-payment-safe-or-not</div>
<div class="r" style="left:1079px;top:598px;width:44px;height:23px;background:#f3f4f6;border-radius:4px;"></div>
<div class="t" style="left:1087px;top:604px;font-size:12px;color:#374151;">Loan</div>
<div class="t" style="left:1188.5px;top:601px;font-size:14px;color:#2d3748;font-weight:bold;">9</div>
<div class="t" style="left:1267px;top:601px;font-size:14px;color:#5a6372;letter-spacing:0.12px;">Jan 13, 2026</div>
<div class="r" style="left:1388px;top:598px;width:76px;height:23px;background:#d9fbe3;border-radius:12px;"></div>
<div class="t" style="left:1396.5px;top:604px;font-size:12px;color:#16782f;font-weight:bold;letter-spacing:0.25px;">Published</div>
<svg style="position:absolute;left:1520px;top:600px;" width="18.00" height="16" viewBox="0 0 576 512"><path fill="#9ca3af" d="M288 32c-80.8 0-145.5 36.8-192.6 80.6C48.6 156 17.3 208 2.5 243.7c-3.3 7.9-3.3 16.7 0 24.6C17.3 304 48.6 356 95.4 399.4C142.5 443.2 207.2 480 288 480s145.5-36.8 192.6-80.6c46.8-43.5 78.1-95.4 93-131.1c3.3-7.9 3.3-16.7 0-24.6c-14.9-35.7-46.2-87.7-93-131.1C433.5 68.8 368.8 32 288 32zM144 256a144 144 0 1 1 288 0 144 144 0 1 1 -288 0zm144-64c0 35.3-28.7 64-64 64c-7.1 0-13.9-1.2-20.3-3.3c-5.5-1.8-11.9 1.6-11.7 7.4c.3 6.9 1.3 13.8 3.200 20.7c13.7 51.2 66.4 81.6 117.6 67.9s81.6-66.4 67.9-117.6c-11.1-41.5-47.8-69.4-88.6-71.1c-5.8-.2-9.2 6.1-7.4 11.7c2.1 6.4 3.3 13.2 3.3 20.3z"/></svg>
<div class="r" style="left:1558px;top:591px;width:32px;height:34px;background:#eff6ff;border-radius:8px;"></div>
<svg style="position:absolute;left:1566px;top:600px;" width="16.00" height="16" viewBox="0 0 512 512"><path fill="#3b82f6" d="M362.7 19.3L314.3 67.7 444.3 197.7l48.4-48.4c25-25 25-65.5 0-90.5L453.3 19.3c-25-25-65.5-25-90.5 0zm-71 71L58.6 323.5c-10.4 10.4-18 23.3-22.2 37.4L1 481.2C-1.5 489.7 .8 498.8 7 505s15.3 8.5 23.7 6.1l120.3-35.4c14.1-4.2 27-11.8 37.4-22.2L421.7 220.3 291.7 90.3z"/></svg>
<div class="r" style="left:1602px;top:591px;width:30px;height:34px;background:#fef2f2;border-radius:8px;"></div>
<svg style="position:absolute;left:1610px;top:600px;" width="14.00" height="16" viewBox="0 0 448 512"><path fill="#ef4444" d="M135.2 17.7L128 32H32C14.3 32 0 46.3 0 64S14.3 96 32 96H416c17.7 0 32-14.3 32-32s-14.3-32-32-32H320l-7.2-14.3C307.4 6.8 296.3 0 284.2 0H163.8c-12.1 0-23.2 6.8-28.6 17.7zM416 128H32L53.2 467c1.6 25.3 22.6 45 47.9 45H346.9c25.300 0 46.3-19.7 47.9-45L416 128z"/></svg>
<div class="r" style="left:300px;top:720px;width:1348px;height:1px;background:#eef0f3;"></div>
<div class="thumb" style="left:316px;top:663px"><svg width="64" height="40" viewBox="0 0 64 40"><defs><clipPath id="c3"><rect x="0.5" y="0.5" width="63" height="39" rx="6"/></clipPath></defs><g clip-path="url(#c3)">
<defs><linearGradient id="g3" x1="0" y1="0" x2="0" y2="1"><stop offset="0" stop-color="#c3ccd2"/><stop offset="0.35" stop-color="#b9a48e"/><stop offset="0.6" stop-color="#a88b70"/><stop offset="0.75" stop-color="#8b9aa4"/><stop offset="1" stop-color="#6d8494"/></linearGradient></defs>
<rect width="64" height="40" fill="url(#g3)"/>
<rect x="50" y="1" width="7" height="22" fill="#5a6874"/><circle cx="53" cy="8" r="0.8" fill="#f0a050"/><circle cx="55" cy="13" r="0.8" fill="#f0a050"/>
<rect x="58" y="4" width="5" height="18" fill="#6a7680"/>
<rect x="2" y="10" width="4" height="10" fill="#6f7a84"/><rect x="6" y="12" width="4" height="8" fill="#c08a60"/>
<rect x="55" y="17" width="9" height="6" fill="#d09060"/>
<rect x="57" y="19" width="7" height="10" fill="#9fb3c0"/>
<path d="M1 29 L1 17 Q3 15 9 15 L14 16 L14 29 Z" fill="#1c232c"/>
<path d="M12 30 L13 16 Q17 13 22 15 L27 22 L29 27 L22 30 Z" fill="#46524e"/>
<path d="M17 8 Q21 6 25 9 L25 14 L20 16 L17 13 Z" fill="#24282c"/>
<path d="M46 10 Q49 8 52 11 L51 16 L47 16 Z" fill="#221e1e"/>
<path d="M41 24 L44 17 Q49 15 54 18 L56 30 L44 30 Z" fill="#26385a"/>
<rect x="29" y="2" width="14" height="21" rx="1.5" fill="#1a2226"/>
<rect x="30.5" y="4" width="11" height="18" fill="#5f8080"/>
<rect x="31.5" y="9" width="4" height="4" fill="#8fb0b0"/><rect x="36.5" y="8" width="4" height="12" fill="#6fc0a0"/><rect x="31.5" y="14" width="4" height="5" fill="#8fa8a8"/>
<rect x="33" y="5" width="3" height="1.5" fill="#eef"/>
<ellipse cx="35" cy="25" rx="7" ry="2" fill="#e8b070" opacity="0.8"/>
<rect x="0" y="29" width="64" height="11" fill="#80939e"/>
<rect x="11" y="30.5" width="10" height="2.2" fill="#161b20"/><rect x="27" y="30.5" width="10" height="2.2" fill="#161b20"/><rect x="44" y="30.5" width="12" height="2.2" fill="#161b20"/>
<rect x="10" y="35" width="6" height="2" fill="#1b2026"/><rect x="20" y="35" width="5" height="2" fill="#1b2026"/><rect x="32" y="35" width="3" height="2" fill="#1b2026"/><rect x="44" y="35" width="12" height="2" fill="#1b2026"/>
</g><rect x="0.5" y="0.5" width="63" height="39" rx="6" fill="none" stroke="#e5e7eb" stroke-width="1"/></svg></div>
<div class="t" style="left:418px;top:667px;font-size:16px;color:#1f2937;font-weight:bold;letter-spacing:0.066px;">Personal Loan for Gig Workers (Zomato, Swiggy, Uber)</div>
<div class="t" style="left:418px;top:689px;font-size:13px;color:#6b7280;letter-spacing:0.084px;">/personal-loan-for-gig-workers</div>
<div class="r" style="left:1079px;top:673px;width:44px;height:23px;background:#f3f4f6;border-radius:4px;"></div>
<div class="t" style="left:1087px;top:679px;font-size:12px;color:#374151;">Loan</div>
<div class="t" style="left:1188.5px;top:676px;font-size:14px;color:#2d3748;font-weight:bold;">6</div>
<div class="t" style="left:1267px;top:676px;font-size:14px;color:#5a6372;letter-spacing:0.12px;">Jan 13, 2026</div>
<div class="r" style="left:1388px;top:673px;width:76px;height:23px;background:#d9fbe3;border-radius:12px;"></div>
<div class="t" style="left:1396.5px;top:679px;font-size:12px;color:#16782f;font-weight:bold;letter-spacing:0.25px;">Published</div>
<svg style="position:absolute;left:1520px;top:675px;" width="18.00" height="16" viewBox="0 0 576 512"><path fill="#9ca3af" d="M288 32c-80.8 0-145.5 36.8-192.6 80.6C48.6 156 17.3 208 2.5 243.7c-3.3 7.9-3.3 16.7 0 24.6C17.3 304 48.6 356 95.4 399.4C142.5 443.2 207.2 480 288 480s145.5-36.8 192.6-80.6c46.8-43.5 78.1-95.4 93-131.1c3.3-7.9 3.3-16.7 0-24.6c-14.9-35.7-46.2-87.7-93-131.1C433.5 68.8 368.8 32 288 32zM144 256a144 144 0 1 1 288 0 144 144 0 1 1 -288 0zm144-64c0 35.3-28.7 64-64 64c-7.1 0-13.9-1.2-20.3-3.3c-5.5-1.8-11.9 1.6-11.7 7.4c.3 6.9 1.3 13.8 3.200 20.7c13.7 51.2 66.4 81.6 117.6 67.9s81.6-66.4 67.9-117.6c-11.1-41.5-47.8-69.4-88.6-71.1c-5.8-.2-9.2 6.1-7.4 11.7c2.1 6.4 3.3 13.2 3.3 20.3z"/></svg>
<div class="r" style="left:1558px;top:666px;width:32px;height:34px;background:#eff6ff;border-radius:8px;"></div>
<svg style="position:absolute;left:1566px;top:675px;" width="16.00" height="16" viewBox="0 0 512 512"><path fill="#3b82f6" d="M362.7 19.3L314.3 67.7 444.3 197.7l48.4-48.4c25-25 25-65.5 0-90.5L453.3 19.3c-25-25-65.5-25-90.5 0zm-71 71L58.6 323.5c-10.4 10.4-18 23.3-22.2 37.4L1 481.2C-1.5 489.7 .8 498.8 7 505s15.3 8.5 23.7 6.1l120.3-35.4c14.1-4.2 27-11.8 37.4-22.2L421.7 220.3 291.7 90.3z"/></svg>
<div class="r" style="left:1602px;top:666px;width:30px;height:34px;background:#fef2f2;border-radius:8px;"></div>
<svg style="position:absolute;left:1610px;top:675px;" width="14.00" height="16" viewBox="0 0 448 512"><path fill="#ef4444" d="M135.2 17.7L128 32H32C14.3 32 0 46.3 0 64S14.3 96 32 96H416c17.7 0 32-14.3 32-32s-14.3-32-32-32H320l-7.2-14.3C307.4 6.8 296.3 0 284.2 0H163.8c-12.1 0-23.2 6.8-28.6 17.7zM416 128H32L53.2 467c1.6 25.3 22.6 45 47.9 45H346.9c25.300 0 46.3-19.7 47.9-45L416 128z"/></svg>
<div class="r" style="left:300px;top:795px;width:1348px;height:1px;background:#eef0f3;"></div>
<div class="thumb" style="left:316px;top:738px"><svg width="64" height="40" viewBox="0 0 64 40"><defs><clipPath id="c4"><rect x="0.5" y="0.5" width="63" height="39" rx="6"/></clipPath></defs><g clip-path="url(#c4)">
<rect width="64" height="40" fill="#d5dde4"/>
<rect x="0" y="0" width="64" height="14" fill="#c3d0da"/>
<rect x="6" y="0" width="1" height="20" fill="#8f9aa3"/><rect x="48" y="9" width="1" height="14" fill="#8f9aa3"/>
<rect x="34" y="9" width="24" height="14" fill="#b6c3cd"/>
<rect x="0" y="30" width="64" height="10" fill="#bcc2c7"/>
<polygon points="27,4 60,0 61,6 28,8" fill="#2e5a9e"/>
<rect x="35" y="3.5" width="16" height="1" fill="#e6eefa"/>
<circle cx="61.5" cy="4" r="2.5" fill="#f2b531"/>
<rect x="1" y="19" width="9" height="9" rx="2" fill="#e8781e"/><rect x="1" y="21" width="8" height="2" fill="#9ab"/>
<rect x="10.5" y="3" width="19.5" height="37" rx="2" fill="#111c30"/>
<rect x="12" y="5" width="16.5" height="34" fill="#1f437f"/>
<rect x="16" y="3" width="8" height="1.5" fill="#000"/>
<rect x="9" y="11" width="21.5" height="10.5" fill="#fafafa"/>
<path d="M11.5 15 L13.5 12 L14.5 15 Z" fill="#ee7f1a"/>
<rect x="12" y="16.5" width="13" height="1.6" fill="#333"/><rect x="12" y="19" width="9" height="1" fill="#777"/>
<path d="M17 30 L21 26" stroke="#5a7fb8" stroke-width="0.8"/>
<rect x="37.5" y="12.7" width="22" height="20" fill="#f8f8f8"/>
<rect x="37.5" y="12.7" width="22" height="4.3" fill="#f3902e"/>
<rect x="40" y="11.5" width="1" height="3" fill="#444"/><rect x="56" y="11.5" width="1" height="3" fill="#444"/>
<circle cx="48" cy="24" r="1" fill="#d03030"/><rect x="41" y="21" width="15" height="0.8" fill="#bbb"/><rect x="41" y="27" width="15" height="0.8" fill="#bbb"/>
<rect x="30" y="26" width="7.5" height="6.7" fill="#ffffff"/><rect x="31" y="29" width="5" height="1" fill="#2e5a9e"/>
</g><rect x="0.5" y="0.5" width="63" height="39" rx="6" fill="none" stroke="#e5e7eb" stroke-width="1"/></svg></div>
<div class="t" style="left:418px;top:742px;font-size:16px;color:#1f2937;font-weight:bold;letter-spacing:-0.012px;">What Happens If You Miss One Car Loan EMI?</div>
<div class="t" style="left:418px;top:764px;font-size:13px;color:#6b7280;letter-spacing:0.133px;">/what-happens-if-you-miss-one-car-loan-emi</div>
<div class="r" style="left:1079px;top:748px;width:44px;height:23px;background:#f3f4f6;border-radius:4px;"></div>
<div class="t" style="left:1087px;top:754px;font-size:12px;color:#374151;">Loan</div>
<div class="t" style="left:1188.5px;top:751px;font-size:14px;color:#2d3748;font-weight:bold;">8</div>
<div class="t" style="left:1267px;top:751px;font-size:14px;color:#5a6372;letter-spacing:0.12px;">Jan 13, 2026</div>
<div class="r" style="left:1388px;top:748px;width:76px;height:23px;background:#d9fbe3;border-radius:12px;"></div>
<div class="t" style="left:1396.5px;top:754px;font-size:12px;color:#16782f;font-weight:bold;letter-spacing:0.25px;">Published</div>
<svg style="position:absolute;left:1520px;top:750px;" width="18.00" height="16" viewBox="0 0 576 512"><path fill="#9ca3af" d="M288 32c-80.8 0-145.5 36.8-192.6 80.6C48.6 156 17.3 208 2.5 243.7c-3.3 7.9-3.3 16.7 0 24.6C17.3 304 48.6 356 95.4 399.4C142.5 443.2 207.2 480 288 480s145.5-36.8 192.6-80.6c46.8-43.5 78.1-95.4 93-131.1c3.3-7.9 3.3-16.7 0-24.6c-14.9-35.7-46.2-87.7-93-131.1C433.5 68.8 368.8 32 288 32zM144 256a144 144 0 1 1 288 0 144 144 0 1 1 -288 0zm144-64c0 35.3-28.7 64-64 64c-7.1 0-13.9-1.2-20.3-3.3c-5.5-1.8-11.9 1.6-11.7 7.4c.3 6.9 1.3 13.8 3.200 20.7c13.7 51.2 66.4 81.6 117.6 67.9s81.6-66.4 67.9-117.6c-11.1-41.5-47.8-69.4-88.6-71.1c-5.8-.2-9.2 6.1-7.4 11.7c2.1 6.4 3.3 13.2 3.3 20.3z"/></svg>
<div class="r" style="left:1558px;top:741px;width:32px;height:34px;background:#eff6ff;border-radius:8px;"></div>
<svg style="position:absolute;left:1566px;top:750px;" width="16.00" height="16" viewBox="0 0 512 512"><path fill="#3b82f6" d="M362.7 19.3L314.3 67.7 444.3 197.7l48.4-48.4c25-25 25-65.5 0-90.5L453.3 19.3c-25-25-65.5-25-90.5 0zm-71 71L58.6 323.5c-10.4 10.4-18 23.3-22.2 37.4L1 481.2C-1.5 489.7 .8 498.8 7 505s15.3 8.5 23.7 6.1l120.3-35.4c14.1-4.2 27-11.8 37.4-22.2L421.7 220.3 291.7 90.3z"/></svg>
<div class="r" style="left:1602px;top:741px;width:30px;height:34px;background:#fef2f2;border-radius:8px;"></div>
<svg style="position:absolute;left:1610px;top:750px;" width="14.00" height="16" viewBox="0 0 448 512"><path fill="#ef4444" d="M135.2 17.7L128 32H32C14.3 32 0 46.3 0 64S14.3 96 32 96H416c17.7 0 32-14.3 32-32s-14.3-32-32-32H320l-7.2-14.3C307.4 6.8 296.3 0 284.2 0H163.8c-12.1 0-23.2 6.8-28.6 17.7zM416 128H32L53.2 467c1.6 25.3 22.6 45 47.9 45H346.9c25.300 0 46.3-19.7 47.9-45L416 128z"/></svg>
<div class="r" style="left:300px;top:870px;width:1348px;height:1px;background:#eef0f3;"></div>
<div class="thumb" style="left:316px;top:813px"><svg width="64" height="40" viewBox="0 0 64 40"><defs><clipPath id="c5"><rect x="0.5" y="0.5" width="63" height="39" rx="6"/></clipPath></defs><g clip-path="url(#c5)">
<defs><linearGradient id="g5" x1="0" y1="0" x2="1" y2="0"><stop offset="0" stop-color="#9aa2a6"/><stop offset="0.6" stop-color="#6c7479"/><stop offset="1" stop-color="#23292c"/></linearGradient></defs>
<rect width="64" height="40" fill="#b9bfc2"/>
<rect x="0" y="0" width="24" height="34" fill="#dbe2e7"/>
<rect x="3" y="16" width="4" height="14" fill="#a9b2b9"/><rect x="8" y="19" width="3" height="11" fill="#b3bcc2"/><rect x="15" y="18" width="4" height="12" fill="#b5bec4"/>
<rect x="0" y="27" width="24" height="6" fill="#b2bba6"/>
<rect x="12" y="2" width="1.5" height="31" fill="#7d868c"/><rect x="22" y="4" width="1.5" height="28" fill="#7d868c"/>
<rect x="10" y="0" width="54" height="5" fill="#7b8287"/>
<rect x="24" y="5" width="20" height="25" fill="#c9cfd2"/>
<rect x="40" y="0" width="24" height="40" fill="url(#g5)"/>
<rect x="44" y="14" width="6" height="9" fill="#c3cacd"/>
<rect x="48" y="22" width="8" height="14" fill="#3b4144"/>
<rect x="0" y="33" width="44" height="7" fill="#cdd2d5"/>
<path d="M24 20 Q25 16 28 17 L28 31 L25 31 Z" fill="#cf9f82"/>
<path d="M39 17 Q42 17 44 22 L47 32 L52 40 L35 40 L34 34 Z" fill="#c99b7f"/>
<rect x="26.5" y="6" width="13" height="29.5" rx="1.5" fill="#23292e"/>
<rect x="27.7" y="7.3" width="10.6" height="27" fill="#eef3f8"/>
<path d="M33 9.5 L37 11 L37 15.5 Q37 19 33 20.5 Q29 19 29 15.5 L29 11 Z" fill="#2f6fd3"/>
<rect x="31" y="13" width="4" height="3" fill="#bcd0f5"/>
<rect x="29" y="23" width="1.2" height="1.2" fill="#2aa84a"/><rect x="31" y="22.5" width="5" height="1.8" fill="#222"/>
<rect x="29" y="27" width="1.2" height="1.2" fill="#2f6fd3"/><rect x="31" y="27" width="3" height="1.5" fill="#2aa84a"/>
<rect x="27.7" y="30.5" width="10.6" height="3.8" fill="#cfe0f0"/>
</g><rect x="0.5" y="0.5" width="63" height="39" rx="6" fill="none" stroke="#e5e7eb" stroke-width="1"/></svg></div>
<div class="t" style="left:418px;top:817px;font-size:16px;color:#1f2937;font-weight:bold;letter-spacing:-0.032px;">Are Instant Loan Apps Safe in India? What RBI Allows</div>
<div class="t" style="left:418px;top:839px;font-size:13px;color:#6b7280;letter-spacing:0.113px;">/are-instant-loan-apps-safe-in-india</div>
<div class="r" style="left:1079px;top:823px;width:44px;height:23px;background:#f3f4f6;border-radius:4px;"></div>
<div class="t" style="left:1087px;top:829px;font-size:12px;color:#374151;">Loan</div>
<div class="t" style="left:1188.5px;top:826px;font-size:14px;color:#2d3748;font-weight:bold;">6</div>
<div class="t" style="left:1267px;top:826px;font-size:14px;color:#5a6372;letter-spacing:0.12px;">Jan 13, 2026</div>
<div class="r" style="left:1388px;top:823px;width:76px;height:23px;background:#d9fbe3;border-radius:12px;"></div>
<div class="t" style="left:1396.5px;top:829px;font-size:12px;color:#16782f;font-weight:bold;letter-spacing:0.25px;">Published</div>
<svg style="position:absolute;left:1520px;top:825px;" width="18.00" height="16" viewBox="0 0 576 512"><path fill="#9ca3af" d="M288 32c-80.8 0-145.5 36.8-192.6 80.6C48.6 156 17.3 208 2.5 243.7c-3.3 7.9-3.3 16.7 0 24.6C17.3 304 48.6 356 95.4 399.4C142.5 443.2 207.2 480 288 480s145.5-36.8 192.6-80.6c46.8-43.5 78.1-95.4 93-131.1c3.3-7.9 3.3-16.7 0-24.6c-14.9-35.7-46.2-87.7-93-131.1C433.5 68.8 368.8 32 288 32zM144 256a144 144 0 1 1 288 0 144 144 0 1 1 -288 0zm144-64c0 35.3-28.7 64-64 64c-7.1 0-13.9-1.2-20.3-3.3c-5.5-1.8-11.9 1.6-11.7 7.4c.3 6.9 1.3 13.8 3.200 20.7c13.7 51.2 66.4 81.6 117.6 67.9s81.6-66.4 67.9-117.6c-11.1-41.5-47.8-69.4-88.6-71.1c-5.8-.2-9.2 6.1-7.4 11.7c2.1 6.4 3.3 13.2 3.3 20.3z"/></svg>
<div class="r" style="left:1558px;top:816px;width:32px;height:34px;background:#eff6ff;border-radius:8px;"></div>
<svg style="position:absolute;left:1566px;top:825px;" width="16.00" height="16" viewBox="0 0 512 512"><path fill="#3b82f6" d="M362.7 19.3L314.3 67.7 444.3 197.7l48.4-48.4c25-25 25-65.5 0-90.5L453.3 19.3c-25-25-65.5-25-90.5 0zm-71 71L58.6 323.5c-10.4 10.4-18 23.3-22.2 37.4L1 481.2C-1.5 489.7 .8 498.8 7 505s15.3 8.5 23.7 6.1l120.3-35.4c14.1-4.2 27-11.8 37.4-22.2L421.7 220.3 291.7 90.3z"/></svg>
<div class="r" style="left:1602px;top:816px;width:30px;height:34px;background:#fef2f2;border-radius:8px;"></div>
<svg style="position:absolute;left:1610px;top:825px;" width="14.00" height="16" viewBox="0 0 448 512"><path fill="#ef4444" d="M135.2 17.7L128 32H32C14.3 32 0 46.3 0 64S14.3 96 32 96H416c17.7 0 32-14.3 32-32s-14.3-32-32-32H320l-7.2-14.3C307.4 6.8 296.3 0 284.2 0H163.8c-12.1 0-23.2 6.8-28.6 17.7zM416 128H32L53.2 467c1.6 25.3 22.6 45 47.9 45H346.9c25.300 0 46.3-19.7 47.9-45L416 128z"/></svg>
<div class="r" style="left:300px;top:871px;width:1348px;height:40px;background:linear-gradient(#fefefe,#fafafa);"></div>
<div class="r" style="left:300px;top:945px;width:1348px;height:1px;background:#eef0f3;"></div>
<div class="thumb" style="left:316px;top:888px"><svg width="64" height="40" viewBox="0 0 64 40"><defs><clipPath id="c6"><rect x="0.5" y="0.5" width="63" height="39" rx="6"/></clipPath></defs><g clip-path="url(#c6)">
<rect width="64" height="40" fill="#0f2350"/>
<rect x="3" y="2" width="54" height="34" fill="#ffffff"/>
<polygon points="4.5,10 7,4.5 9.5,10" fill="#d42a2a"/>
<rect x="12" y="3.5" width="6" height="1.2" fill="#555"/><rect x="19" y="3.5" width="14" height="1.6" fill="#222"/><rect x="35" y="3.5" width="8" height="1.2" fill="#333"/>
<rect x="12" y="6.5" width="20" height="1.2" fill="#666"/><rect x="34" y="6.5" width="6" height="1.2" fill="#999"/>
</g><rect x="0.5" y="0.5" width="63" height="39" rx="6" fill="none" stroke="#e5e7eb" stroke-width="1"/></svg></div>
<div class="t" style="left:418px;top:892px;font-size:16px;color:#1f2937;font-weight:bold;letter-spacing:-0.05px;">Is Pre-Approved Loan Really Cheaper or a Trap?</div>
<div class="t" style="left:418px;top:914px;font-size:13px;color:#6b7280;letter-spacing:0.1px;">/is-pre-approved-loan-really-cheaper-or-a-trap</div>
<div class="r" style="left:1079px;top:898px;width:44px;height:23px;background:#f3f4f6;border-radius:4px;"></div>
<div class="t" style="left:1087px;top:904px;font-size:12px;color:#374151;">Loan</div>
<div class="t" style="left:1188.5px;top:901px;font-size:14px;color:#2d3748;font-weight:bold;">7</div>
<div class="t" style="left:1267px;top:901px;font-size:14px;color:#5a6372;letter-spacing:0.12px;">Jan 13, 2026</div>
<div class="r" style="left:1388px;top:898px;width:76px;height:23px;background:#d9fbe3;border-radius:12px;"></div>
<div class="t" style="left:1396.5px;top:904px;font-size:12px;color:#16782f;font-weight:bold;letter-spacing:0.25px;">Published</div>
<svg style="position:absolute;left:1520px;top:900px;" width="18.00" height="16" viewBox="0 0 576 512"><path fill="#9ca3af" d="M288 32c-80.8 0-145.5 36.8-192.6 80.6C48.6 156 17.3 208 2.5 243.7c-3.3 7.9-3.3 16.7 0 24.6C17.3 304 48.6 356 95.4 399.4C142.5 443.2 207.2 480 288 480s145.5-36.8 192.6-80.6c46.8-43.5 78.1-95.4 93-131.1c3.3-7.9 3.3-16.7 0-24.6c-14.9-35.7-46.2-87.7-93-131.1C433.5 68.8 368.8 32 288 32zM144 256a144 144 0 1 1 288 0 144 144 0 1 1 -288 0zm144-64c0 35.3-28.7 64-64 64c-7.1 0-13.9-1.2-20.3-3.3c-5.5-1.8-11.9 1.6-11.7 7.4c.3 6.9 1.3 13.8 3.200 20.7c13.7 51.2 66.4 81.6 117.6 67.9s81.6-66.4 67.9-117.6c-11.1-41.5-47.8-69.4-88.6-71.1c-5.8-.2-9.2 6.1-7.4 11.7c2.1 6.4 3.3 13.2 3.3 20.3z"/></svg>
<div class="r" style="left:1558px;top:891px;width:32px;height:34px;background:#eff6ff;border-radius:8px;"></div>
<svg style="position:absolute;left:1566px;top:900px;" width="16.00" height="16" viewBox="0 0 512 512"><path fill="#3b82f6" d="M362.7 19.3L314.3 67.7 444.3 197.7l48.4-48.4c25-25 25-65.5 0-90.5L453.3 19.3c-25-25-65.5-25-90.5 0zm-71 71L58.6 323.5c-10.4 10.4-18 23.3-22.2 37.4L1 481.2C-1.5 489.7 .8 498.8 7 505s15.3 8.5 23.7 6.1l120.3-35.4c14.1-4.2 27-11.8 37.4-22.2L421.7 220.3 291.7 90.3z"/></svg>
<div class="r" style="left:1602px;top:891px;width:30px;height:34px;background:#fef2f2;border-radius:8px;"></div>
<svg style="position:absolute;left:1610px;top:900px;" width="14.00" height="16" viewBox="0 0 448 512"><path fill="#ef4444" d="M135.2 17.7L128 32H32C14.3 32 0 46.3 0 64S14.3 96 32 96H416c17.7 0 32-14.3 32-32s-14.3-32-32-32H320l-7.2-14.3C307.4 6.8 296.3 0 284.2 0H163.8c-12.1 0-23.2 6.8-28.6 17.7zM416 128H32L53.2 467c1.6 25.3 22.6 45 47.9 45H346.9c25.300 0 46.3-19.7 47.9-45L416 128z"/></svg>
</body></html>
